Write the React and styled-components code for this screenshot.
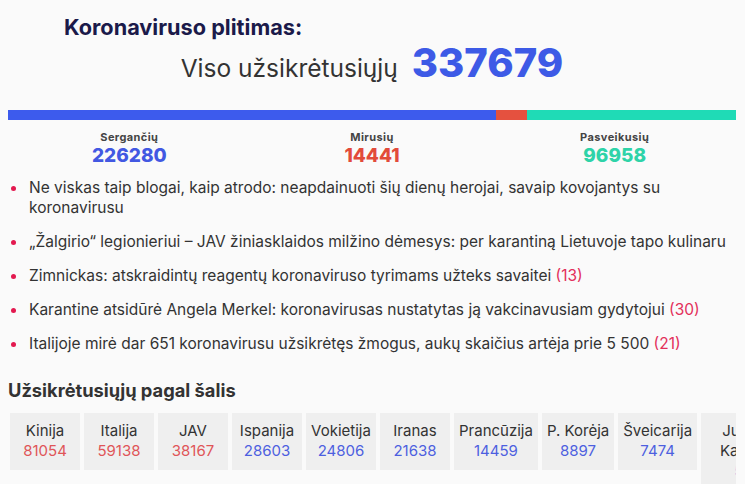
import React from 'react';
import styled, { createGlobalStyle } from 'styled-components';

const GlobalStyle = createGlobalStyle`
  html { background: #ffffff; }
  body {
    margin: 0;
    width: 745px;
    min-height: 484px;
    background: #fafafa;
    font-family: Inter, "Noto Sans", sans-serif;
    color: #333;
  }
`;

const Page = styled.div`
  width: 728px;
  margin: 0 8px;
  padding-top: 15px;
  overflow: hidden;
  height: 469px;
`;

const Title = styled.h1`
  margin: 0;
  padding-left: 56px;
  font-size: 21.7px;
  line-height: 24px;
  font-weight: 700;
  color: #1b1a4a;
`;

const TotalRow = styled.div`
  display: flex;
  justify-content: center;
  align-items: baseline;
  gap: 14px;
`;

const TotalLabel = styled.span`
  font-size: 24.5px;
  color: #333;
`;

const TotalValue = styled.span`
  font-size: 40px;
  line-height: 47px;
  font-weight: 800;
  color: #3d5ae6;
`;

const Bar = styled.div`
  display: flex;
  height: 10px;
  margin-top: 24px;
`;

const BarPart = styled.div`
  height: 100%;
  background: ${p => p.$color};
`;

const Stats = styled.div`
  display: grid;
  grid-template-columns: repeat(3, 1fr);
  margin-top: 10px;
  text-align: center;
`;

const StatLabel = styled.div`
  font-size: 11px;
  line-height: 14px;
  font-weight: 700;
  letter-spacing: 0.4px;
  color: #444;
`;

const StatValue = styled.div`
  font-size: 19px;
  line-height: 24px;
  font-weight: 800;
  color: ${p => p.$color};
`;

const News = styled.ul`
  list-style: none;
  margin: 10px 0 0;
  padding: 0;
`;

const NewsItem = styled.li`
  position: relative;
  padding-left: 21px;
  font-size: 15.5px;
  line-height: 20px;
  color: #333;
  & + & { margin-top: 14px; }
  &::before {
    content: '';
    position: absolute;
    left: 3px;
    top: 8px;
    width: 5px;
    height: 5px;
    border-radius: 50%;
    background: #e3194f;
  }
`;

const Count = styled.span`
  color: #e3305a;
`;

const SectionTitle = styled.h2`
  margin: 25px 0 0;
  font-size: 18.3px;
  line-height: 22px;
  font-weight: 700;
  color: #333;
`;

const Countries = styled.div`
  display: flex;
  align-items: flex-start;
  gap: 4px;
  margin: 12px 0 0 2px;
`;

const Card = styled.div`
  flex: none;
  min-width: 60px;
  max-width: 94px;
  padding: 8px 5px 9px;
  background: #efefef;
  text-align: center;
  font-size: 15px;
  line-height: 20px;
`;

const CountryName = styled.div`
  color: #333;
`;

const CountryCount = styled.div`
  color: ${p => (p.$hot ? '#e05558' : '#4d5fe0')};
`;

const sick = 226280;
const dead = 14441;
const healed = 96958;
const total = 337679;

const news = [
  { text: 'Ne viskas taip blogai, kaip atrodo: neapdainuoti šių dienų herojai, savaip kovojantys su koronavirusu' },
  { text: '„Žalgirio“ legionieriui – JAV žiniasklaidos milžino dėmesys: per karantiną Lietuvoje tapo kulinaru' },
  { text: 'Zimnickas: atskraidintų reagentų koronaviruso tyrimams užteks savaitei', count: 13 },
  { text: 'Karantine atsidūrė Angela Merkel: koronavirusas nustatytas ją vakcinavusiam gydytojui', count: 30 },
  { text: 'Italijoje mirė dar 651 koronavirusu užsikrėtęs žmogus, aukų skaičius artėja prie 5 500', count: 21 },
];

const countries = [
  ['Kinija', 81054, true],
  ['Italija', 59138, true],
  ['JAV', 38167, true],
  ['Ispanija', 28603],
  ['Vokietija', 24806],
  ['Iranas', 21638],
  ['Prancūzija', 14459],
  ['P. Korėja', 8897],
  ['Šveicarija', 7474],
  ['Jungtinė Karalystė', 5683],
];

export default function App() {
  return (
    <>
      <GlobalStyle />
      <Page>
        <Title>Koronaviruso plitimas:</Title>
        <TotalRow>
          <TotalLabel>Viso užsikrėtusiųjų</TotalLabel>
          <TotalValue>{total}</TotalValue>
        </TotalRow>

        <Bar>
          <BarPart $color="#3d5bed" style={{ width: `${(sick / total) * 100}%` }} />
          <BarPart $color="#e5513f" style={{ width: `${(dead / total) * 100}%` }} />
          <BarPart $color="#1fdbb6" style={{ width: `${(healed / total) * 100}%` }} />
        </Bar>

        <Stats>
          <div>
            <StatLabel>Sergančių</StatLabel>
            <StatValue $color="#4258e2">{sick}</StatValue>
          </div>
          <div>
            <StatLabel>Mirusių</StatLabel>
            <StatValue $color="#e24b3a">{dead}</StatValue>
          </div>
          <div>
            <StatLabel>Pasveikusių</StatLabel>
            <StatValue $color="#2ed3a8">{healed}</StatValue>
          </div>
        </Stats>

        <News>
          {news.map((n, i) => (
            <NewsItem key={i}>
              {n.text}
              {n.count && <> <Count>({n.count})</Count></>}
            </NewsItem>
          ))}
        </News>

        <SectionTitle>Užsikrėtusiųjų pagal šalis</SectionTitle>
        <Countries>
          {countries.map(([name, count, hot]) => (
            <Card key={name}>
              <CountryName>{name}</CountryName>
              <CountryCount $hot={hot}>{count}</CountryCount>
            </Card>
          ))}
        </Countries>
      </Page>
    </>
  );
}
